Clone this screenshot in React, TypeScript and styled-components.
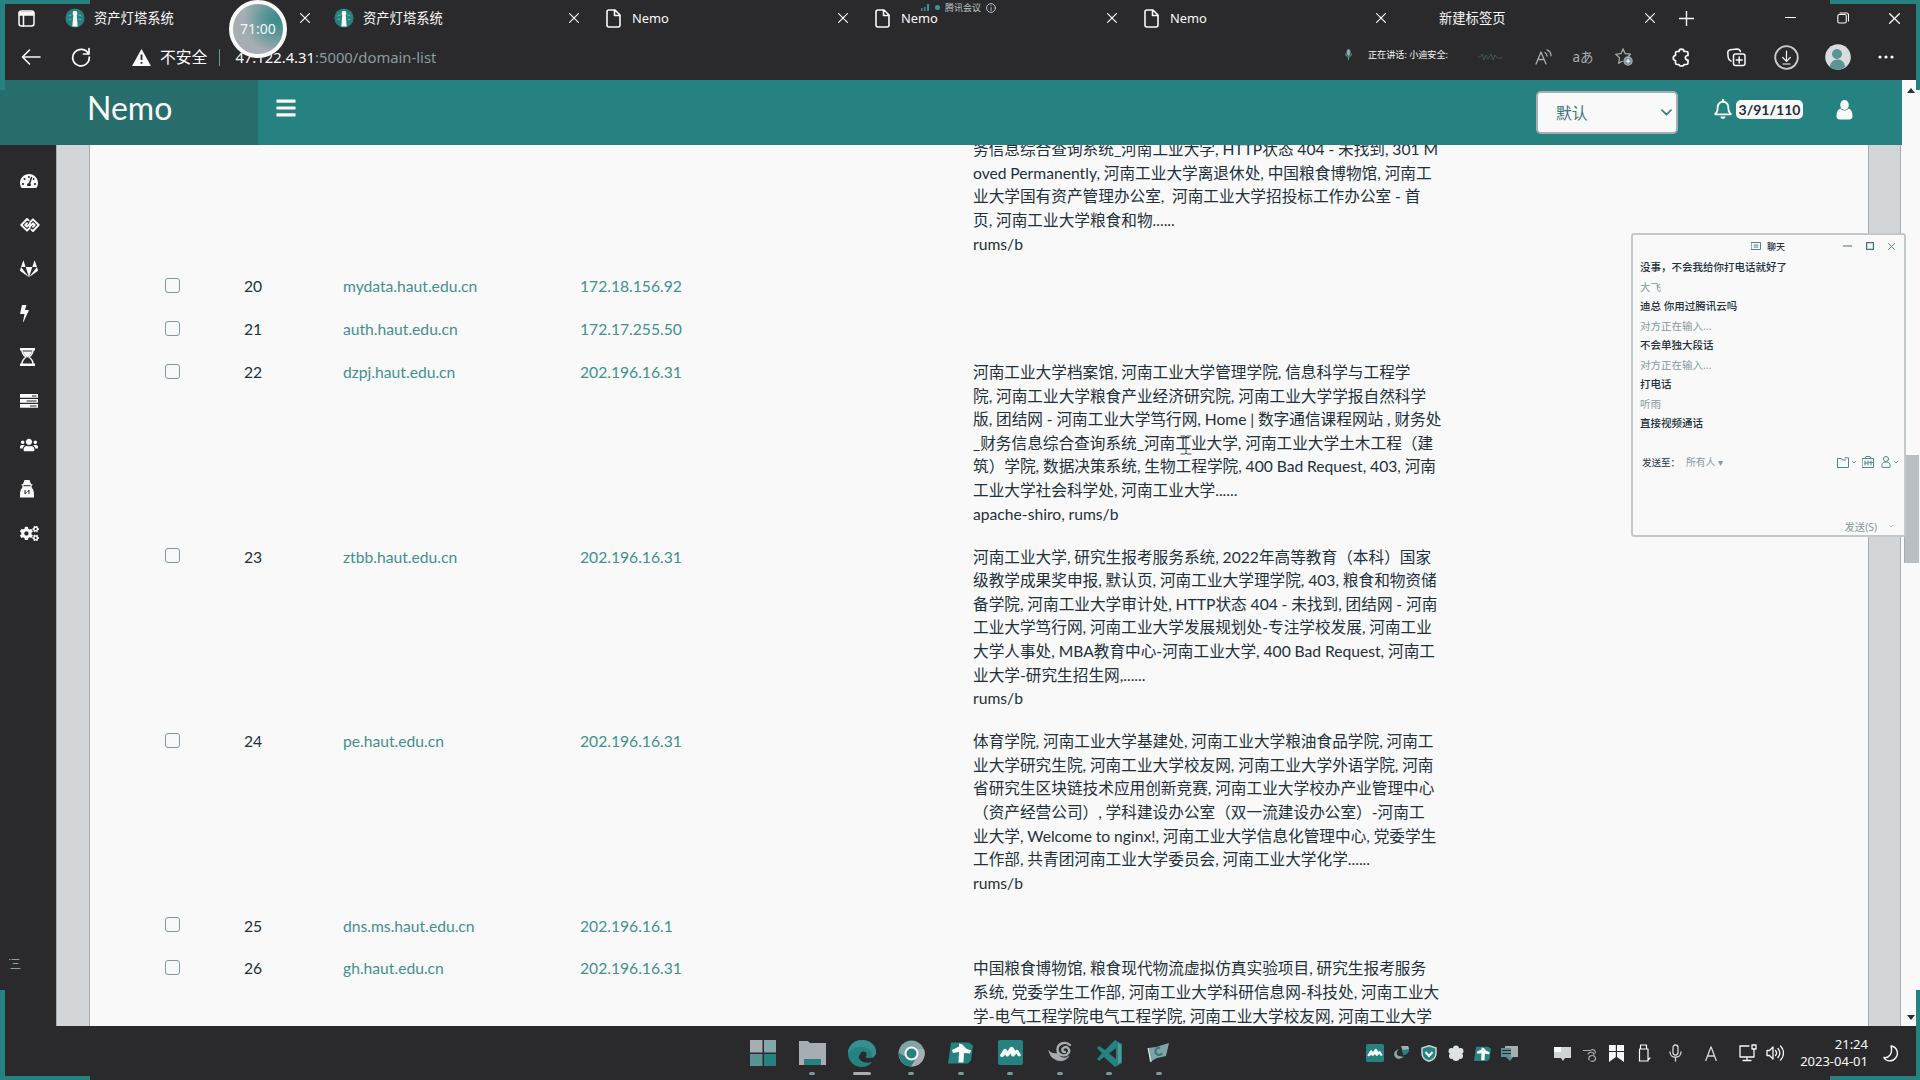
import React from "react";
import styled, { createGlobalStyle, css } from "styled-components";
import { FaGitlab, FaTachometerAlt, FaUsers, FaCogs, FaRegBell, FaBars } from "react-icons/fa";

const c = {
  dark: "#2a2a2c",
  teal: "#258280",
  brand: "#266d6c",
  white: "#f9f9f9",
  gray: "#a6adb3",
  ink: "#22303a",
  link: "#43908f",
  side: "#d3d6d9",
};

const ui = '"Noto Sans", "Noto Sans CJK SC", sans-serif';
const body = 'Lato, "Noto Sans CJK SC", sans-serif';

const Global = createGlobalStyle`
  *, *::before, *::after { box-sizing: border-box; }
  body { margin: 0; background: ${c.dark}; overflow: hidden; }
  svg { display: block; flex: none; }
`;

const Screen = styled.div`
  position: relative;
  width: 1920px;
  height: 1080px;
  display: flex;
  flex-direction: column;
  overflow: hidden;
  background: ${c.dark};
  color: ${c.white};
  font-family: ${ui};
`;

/* ---------- browser chrome ---------- */

const TabStrip = styled.div`
  height: 36px;
  flex: none;
  display: flex;
  align-items: center;
  padding-left: 18px;
`;

const Corner = styled.div`
  width: 47px;
`;

const Tab = styled.div`
  width: 269px;
  height: 36px;
  display: flex;
  align-items: center;
  font-size: 13.3px;
  line-height: 20px;
`;

const Favicon = styled.div`
  width: 20px;
  margin-right: 9px;
  display: flex;
  justify-content: center;
`;

const TabTitle = styled.span<{ $latin?: boolean }>`
  width: 206px;
  ${(p) => p.$latin && css`font-size: 12.9px;`}
`;

const WindowButtons = styled.div`
  display: flex;
  align-items: center;
  justify-content: space-between;
  width: 115px;
  margin-left: 91px;
`;

const AddressBar = styled.div`
  height: 44px;
  flex: none;
  display: flex;
  align-items: center;
  padding: 0 25px 2px 21px;
`;

const NavIcons = styled.div`
  display: flex;
  align-items: center;
  gap: 30px;
  width: 111px;
`;

const Insecure = styled.div`
  display: flex;
  align-items: center;
  gap: 9px;
  font-size: 15.8px;
  line-height: 22px;
`;

const Divider = styled.div`
  width: 1px;
  height: 17px;
  margin: 0 15px 0 12px;
  background: #5c9a9b;
`;

const Url = styled.div`
  font-size: 14.8px;
  line-height: 22px;
  color: #8d9a9e;
  span { color: ${c.white}; }
`;

const Speaking = styled.div`
  display: flex;
  align-items: center;
  gap: 16px;
  margin-left: auto;
  font-size: 9.1px;
  line-height: 14px;
  margin-top: -5px;
  white-space: pre;
`;

const BarIcons = styled.div`
  display: flex;
  align-items: center;
  margin-left: 27px;
`;

const Slot = styled.div<{ $w: number }>`
  width: ${(p) => p.$w}px;
  display: flex;
  align-items: center;
  justify-content: center;
`;

const Translate = styled.span`
  color: ${c.gray};
  font-size: 13.5px;
  line-height: 18px;
  white-space: nowrap;
`;

/* ---------- application ---------- */

const Page = styled.div`
  height: 946px;
  flex: none;
  display: flex;
  background: ${c.white};
`;

const Site = styled.div`
  width: 1902px;
  display: flex;
  flex-direction: column;
`;

const Header = styled.header`
  height: 65px;
  flex: none;
  position: relative;
  z-index: 1;
  display: flex;
  align-items: center;
  background: ${c.teal};
  padding-right: 49px;
`;

const Brand = styled.div`
  width: 258px;
  height: 65px;
  padding: 0 0 9px 87px;
  display: flex;
  align-items: center;
  background: ${c.brand};
  font-family: ${body};
  font-size: 32px;
  line-height: 40px;
`;

const MenuToggle = styled.div`
  margin: 0 auto 10px 17px;
  font-size: 22px;
`;

const Select = styled.div`
  width: 142px;
  height: 43px;
  border: 2px solid ${c.gray};
  border-radius: 5px;
  background: ${c.white};
  display: flex;
  align-items: center;
  justify-content: space-between;
  padding: 0 4px 0 18px;
  color: #3d7478;
  font: 15.8px/24px ${body};
`;

const Notice = styled.div`
  display: flex;
  align-items: center;
  gap: 3px;
  margin: 0 33px 7px 35px;
  font-size: 20px;
`;

const Badge = styled.span`
  width: 67px;
  height: 19px;
  border-radius: 5px;
  background: ${c.white};
  color: ${c.ink};
  text-align: center;
  font: 700 14px/19px ${body};
`;

const HeaderUser = styled.div`
  margin-bottom: 6px;
`;

const Main = styled.div`
  height: 881px;
  display: flex;
`;

const Sidebar = styled.nav`
  width: 56px;
  height: 881px;
  flex: none;
  background: ${c.dark};
  display: flex;
  flex-direction: column;
  padding: 14px 0 0 20px;
`;

const SideItem = styled.div`
  height: 44px;
  display: flex;
  align-items: center;
  font-size: 18px;
`;

const SideFoot = styled.div`
  margin: auto 0 56px -11px;
`;

const Gutter = styled.div<{ $w: number }>`
  width: ${(p) => p.$w}px;
  flex: none;
  background: ${c.side};
  border-left: 1px solid ${c.gray};
  border-right: 1px solid ${c.gray};
`;

const Table = styled.div`
  width: 1778px;
  height: 881px;
  overflow: hidden;
  padding-left: 75px;
  font: 15.67px/23.63px ${body};
  color: ${c.ink};
`;

const Row = styled.div<{ $first?: boolean }>`
  display: grid;
  grid-template-columns: 79px 99px 237px 393px 1fr;
  padding: 9.6px 0;
  ${(p) => p.$first && css`margin-top: -16.6px;`}
`;

const Check = styled.div`
  width: 15px;
  height: 15px;
  margin-top: 2.8px;
  border: 1px solid #7c9a9e;
  border-radius: 3px;
`;

const LinkText = styled.span`
  color: ${c.link};
`;

const Titles = styled.div`
  white-space: pre;
  word-spacing: -0.2px;
`;

const Scrollbar = styled.div`
  width: 18px;
  height: 946px;
  display: flex;
  flex-direction: column;
  align-items: center;
  padding: 8px 0 6px;
  background: ${c.white};
`;

const Thumb = styled.div`
  width: 15px;
  height: 108px;
  margin: 362px 0 auto;
  background: #b9bec3;
  border-left: 1px solid ${c.gray};
`;

/* ---------- chat window ---------- */

const Chat = styled.section`
  position: absolute;
  left: 1631px;
  top: 233px;
  width: 275px;
  height: 304px;
  z-index: 3;
  display: flex;
  flex-direction: column;
  background: ${c.white};
  border: 2px solid #c3c8cb;
  border-radius: 3px;
  color: ${c.ink};
  font-size: 10.5px;
`;

const ChatTitle = styled.div`
  height: 22px;
  display: flex;
  align-items: center;
  padding: 0 9px 0 118px;
  gap: 6px;
  font-size: 9px;
  font-weight: 500;
`;

const ChatButtons = styled.div`
  display: flex;
  align-items: center;
  gap: 14px;
  margin-left: auto;
  color: #3d7478;
`;

const Messages = styled.div`
  padding: 1px 7px 0;
  height: 185px;
  line-height: 19.5px;
`;

const Message = styled.div<{ $muted?: boolean }>`
  color: ${(p) => (p.$muted ? "#859a9f" : c.ink)};
  font-weight: ${(p) => (p.$muted ? 400 : 500)};
`;

const SendTo = styled.div`
  display: flex;
  align-items: center;
  height: 42px;
  padding: 0 6px 2px 9px;
  font-size: 9.5px;
`;

const Audience = styled.span`
  margin: 0 auto 0 6px;
  color: #859a9f;
  font-size: 9.8px;
`;

const ChatTools = styled.div`
  display: flex;
  align-items: center;
  gap: 3px;
  color: #4f8789;
`;

const Tool = styled.span<{ $after?: number }>`
  display: flex;
  align-items: center;
  gap: 3px;
  margin-right: ${(p) => p.$after ?? 0}px;
`;

const Send = styled.div`
  display: flex;
  align-items: center;
  justify-content: flex-end;
  gap: 12px;
  margin-top: auto;
  height: 18px;
  padding-right: 11px;
  color: #859a9f;
  font-size: 10.3px;
`;

/* ---------- taskbar ---------- */

const Taskbar = styled.footer`
  height: 54px;
  flex: none;
  display: flex;
  align-items: center;
  padding: 0 17px 0 738px;
`;

const TaskApp = styled.div`
  width: 49.5px;
  height: 54px;
  display: flex;
  flex-direction: column;
  align-items: center;
  justify-content: space-between;
  padding: 14px 0 5px;
`;

const Running = styled.div<{ $active?: boolean }>`
  width: ${(p) => (p.$active ? 18 : 6)}px;
  height: 3px;
  border-radius: 2px;
  background: ${(p) => (p.$active ? c.gray : "#6f9da0")};
`;

const Tray = styled.div`
  display: flex;
  align-items: center;
  margin-left: auto;
`;

const Clock = styled.div`
  width: 100px;
  text-align: right;
  font-size: 13px;
  line-height: 17.5px;
  padding-right: 9px;
`;

/* ---------- floating overlays ---------- */

const Bracket = styled.div<{ $v: "top" | "bottom"; $h: "left" | "right" }>`
  position: absolute;
  z-index: 5;
  width: 90px;
  height: 90px;
  ${(p) => p.$v}: 0;
  ${(p) => p.$h}: 0;
  border-${(p) => p.$v}: 4px solid ${c.teal};
  border-${(p) => p.$h}: ${(p) => (p.$h === "left" ? 5 : 4)}px solid ${c.teal};
  pointer-events: none;
`;

const Timer = styled.div`
  position: absolute;
  z-index: 6;
  left: 229px;
  top: 0;
  width: 58px;
  height: 58px;
  border: 4px solid ${c.white};
  border-radius: 50%;
  background: radial-gradient(circle at 88% 32%, #3a8a89 0, #5c9798 26%, ${c.gray} 60%);
  text-align: center;
  font-size: 14px;
  line-height: 49px;
  color: #f3f6f6;
`;

const Meeting = styled.div`
  position: absolute;
  z-index: 6;
  left: 921px;
  top: 0;
  height: 15px;
  display: flex;
  align-items: center;
  gap: 5px;
  color: #b7c4c6;
  font-size: 9px;
  line-height: 14px;
`;

const Dot = styled.i`
  width: 5px;
  height: 5px;
  border-radius: 50%;
  background: #2f9b99;
`;

const Caret = styled.div`
  position: absolute;
  z-index: 4;
  left: 1180px;
  top: 435px;
`;

type G = { size?: number; w?: number; h?: number; box?: string; sw?: number; color?: string; fill?: string; children: React.ReactNode };
const Glyph = ({ size = 16, w, h, box = "0 0 24 24", sw = 1.6, color = "currentColor", fill = "none", children }: G) => (
  <svg width={w ?? size} height={h ?? size} viewBox={box} fill={fill} stroke={color} strokeWidth={sw} strokeLinecap="round" strokeLinejoin="round">
    {children}
  </svg>
);

const Close = ({ size = 10 }) => (
  <Glyph size={size} box="0 0 10 10" sw={1.2}><path d="M.6.6l8.8 8.8M9.4.6L.6 9.4" /></Glyph>
);
const FileIcon = () => (
  <Glyph w={15} h={19} box="0 0 15 19" sw={1.6}><path d="M3 1h6l5 5v10a2 2 0 0 1-2 2H3a2 2 0 0 1-2-2V3a2 2 0 0 1 2-2zM8.5 1v5.5H14" /></Glyph>
);
const Lighthouse = () => (
  <svg width="20" height="20" viewBox="0 0 20 20">
    <circle cx="10" cy="10" r="9.6" fill={c.teal} />
    <path d="M8.4 3h3.2l1 3-.9 1 1 11.5H7.3l1-11.5-.9-1z" fill={c.white} />
    <path d="M3.5 8l3-1M3.5 11.5l3-.5M13.5 7l3 1M13.5 11l3 .7" stroke="#7bb0af" />
  </svg>
);
const Chevron = ({ w = 11, sw = 1.8 }) => (
  <Glyph w={w} h={w * 0.6} box="0 0 12 7" sw={sw}><path d="M1 1l5 5 5-5" /></Glyph>
);
const Tau = ({ size = 25 }) => (
  <svg width={size} height={size} viewBox="0 0 25 24">
    <path d="M3 2h18l4 3-2 15-3 3H0z" fill={c.teal} />
    <path d="M4 9.500l7-3.500V3l3.500 1L18 8l5 2-1 3-6-.5-.5 9.500h-5L11 11.500 5 12.500z" fill={c.white} />
  </svg>
);
const Peaks = ({ size = 25 }) => (
  <svg width={size} height={size} viewBox="0 0 24 24">
    <rect width="24" height="24" rx="2" fill={c.teal} />
    <path d="M2 14.500L5 9.500c1-1.500 2.500-1.500 3.500 0l.8 1.200 2-3.200c1-1.500 2.500-1.500 3.500 0l1.700 2.700c1-1.200 2.500-1 3.300.3l2 3.500c.5 1.500-1.500 2.500-2.800 1l-1.500-2-1.500 2c-1 1.200-2.200 1.200-3 0l-1.200-1.700-1.300 1.700c-1 1.200-2.200 1.200-3 0l-.7-1-.8 1c-1.500 2-4.500 1.500-4-.5z" fill={c.white} />
  </svg>
);
const Person = ({ w = 17, h = 20 }) => (
  <svg width={w} height={h} viewBox="0 0 17 20" fill={c.white}>
    <ellipse cx="8.500" cy="5" rx="4.300" ry="5" />
    <path d="M4.500 8.500C1.500 9.500.5 12 .5 16c0 2 1 3.500 3 3.500h10c2 0 3-1.500 3-3.500 0-4-1-6.500-4-7.500-2.500 2.700-5.500 2.700-8 0z" />
  </svg>
);
const Agent = () => (
  <svg width="14" height="18" viewBox="0 0 14 18">
    <path d="M4.500 0h5l1.500 4 2 .8-1.500 1 .3 2.200C13.500 9 14 12 14 15v2.500H0V15c0-3 .5-6 2.200-7l.3-2.200-1.500-1L3 4z" fill={c.white} />
    <path d="M3.500 5.700h7M5 10v4l1.500-2M9 14v-4l-1.500 2" stroke={c.dark} strokeWidth="1" fill="none" />
  </svg>
);
const Diamonds = () => (
  <Glyph w={20} h={14} box="0 0 20 14" sw={1.9}><path d="M8.500 2.200L7 1 1.300 7 7 12.700 9.800 9.800M7 5.200L5.300 7 7 8.700 10 5.700M10.200 4.200L13 1.300 18.700 7 13 13l-1.500-1.200M13 8.800L14.700 7 13 5.300 10 8.300" /></Glyph>
);
const Bolt = () => (
  <svg width="9" height="17" viewBox="0 0 9 17"><path d="M2 0h4.500L5 5h4L3.500 17l-.5-.3L4.500 9H0z" fill={c.white} /></svg>
);
const Hourglass = () => (
  <svg width="15" height="18" viewBox="0 0 15 18">
    <path d="M0 0h15v2.500H0zM0 15.500h15V18H0z" fill={c.white} />
    <path d="M2 2c0 3.500 2 5.500 4 7-2 1.500-4 3.500-4 7M13 2c0 3.500-2 5.500-4 7 2 1.500 4 3.500 4 7" stroke={c.white} strokeWidth="1.500" fill="none" />
    <path d="M3 3.500h9C11.500 6.500 9 8 7.500 9.500 6 8 3.500 6.500 3 3.500z" fill={c.white} />
  </svg>
);
const Tasks = () => (
  <svg width="18" height="14" viewBox="0 0 18 14">
    <path d="M0 0h18v3.800H0zM0 5h18v3.800H0zM0 10h18v3.800H0z" fill={c.white} />
    <path d="M12 1.400h4.500v1H12zM6.500 6.400h10v1h-10zM10 11.400h6.500v1H10z" fill={c.dark} />
  </svg>
);

const tabs = [
  { title: "资产灯塔系统", icon: <Lighthouse /> },
  { title: "资产灯塔系统", icon: <Lighthouse /> },
  { title: "Nemo", icon: <FileIcon /> },
  { title: "Nemo", icon: <FileIcon /> },
  { title: "Nemo", icon: <FileIcon /> },
  { title: "新建标签页", icon: null },
];

const rows = [
  { no: "", host: "", ip: "", text: "务信息综合查询系统_河南工业大学, HTTP状态 404 - 未找到, 301 M\noved Permanently, 河南工业大学离退休处, 中国粮食博物馆, 河南工\n业大学国有资产管理办公室,  河南工业大学招投标工作办公室 - 首\n页, 河南工业大学粮食和物......\nrums/b" },
  { no: "20", host: "mydata.haut.edu.cn", ip: "172.18.156.92", text: "" },
  { no: "21", host: "auth.haut.edu.cn", ip: "172.17.255.50", text: "" },
  { no: "22", host: "dzpj.haut.edu.cn", ip: "202.196.16.31", text: "河南工业大学档案馆, 河南工业大学管理学院, 信息科学与工程学\n院, 河南工业大学粮食产业经济研究院, 河南工业大学学报自然科学\n版, 团结网 - 河南工业大学笃行网, Home | 数字通信课程网站 , 财务处\n_财务信息综合查询系统_河南工业大学, 河南工业大学土木工程（建\n筑）学院, 数据决策系统, 生物工程学院, 400 Bad Request, 403, 河南\n工业大学社会科学处, 河南工业大学......\napache-shiro, rums/b" },
  { no: "23", host: "ztbb.haut.edu.cn", ip: "202.196.16.31", text: "河南工业大学, 研究生报考服务系统, 2022年高等教育（本科）国家\n级教学成果奖申报, 默认页, 河南工业大学理学院, 403, 粮食和物资储\n备学院, 河南工业大学审计处, HTTP状态 404 - 未找到, 团结网 - 河南\n工业大学笃行网, 河南工业大学发展规划处-专注学校发展, 河南工业\n大学人事处, MBA教育中心-河南工业大学, 400 Bad Request, 河南工\n业大学-研究生招生网,......\nrums/b" },
  { no: "24", host: "pe.haut.edu.cn", ip: "202.196.16.31", text: "体育学院, 河南工业大学基建处, 河南工业大学粮油食品学院, 河南工\n业大学研究生院, 河南工业大学校友网, 河南工业大学外语学院, 河南\n省研究生区块链技术应用创新竞赛, 河南工业大学校办产业管理中心\n（资产经营公司）, 学科建设办公室（双一流建设办公室）-河南工\n业大学, Welcome to nginx!, 河南工业大学信息化管理中心, 党委学生\n工作部, 共青团河南工业大学委员会, 河南工业大学化学......\nrums/b" },
  { no: "25", host: "dns.ms.haut.edu.cn", ip: "202.196.16.1", text: "" },
  { no: "26", host: "gh.haut.edu.cn", ip: "202.196.16.31", text: "中国粮食博物馆, 粮食现代物流虚拟仿真实验项目, 研究生报考服务\n系统, 党委学生工作部, 河南工业大学科研信息网-科技处, 河南工业大\n学-电气工程学院电气工程学院, 河南工业大学校友网, 河南工业大学" },
];

const messages: [string, boolean][] = [
  ["没事，不会我给你打电话就好了", false],
  ["大飞", true],
  ["迪总 你用过腾讯云吗", false],
  ["对方正在输入...", true],
  ["不会单独大段话", false],
  ["对方正在输入...", true],
  ["打电话", false],
  ["听雨", true],
  ["直接视频通话", false],
];

const apps = [
  <svg width="26" height="26" viewBox="0 0 26 26"><path d="M0 0h12.500v12.500H0z" fill={c.gray} /><path d="M14 0h12v12.500H14z" fill="#86a7aa" /><path d="M0 14h12.500v12H0z" fill="#589496" /><path d="M14 14h12v12H14z" fill={c.teal} /></svg>,
  <svg width="27" height="26" viewBox="0 0 27 26"><path d="M0 1h9l2 2h16v22H0z" fill={c.gray} /><path d="M5 19h17v6H5z" fill={c.teal} /></svg>,
  <svg width="28" height="27" viewBox="0 0 28 27"><path d="M14 0c8 0 14 5 14 12 0 4-3 6-7 6-4 0-5-2-4-4-2-2-5-1-6 2-1 5 6 8 13 6-3 4-7 5-10 5C6 27 0 21 0 13.500S6 0 14 0z" fill={c.teal} /><path d="M14 0c8 0 14 5 14 12 0 3-2 5-4 6 1-8-5-12-13-11C7 7 3 9 0 13 0 6 6 0 14 0z" fill="#378f8d" /><circle cx="15.500" cy="14.500" r="3" fill={c.dark} /></svg>,
  <svg width="27" height="27" viewBox="0 0 27 27"><circle cx="13.500" cy="13.500" r="13" fill="#7fa4a7" /><path d="M1 13a13 13 0 0 0 12 13.500l5-8-9-1z" fill={c.teal} /><path d="M26 9a13 13 0 0 1-13 17.500l6-9V9z" fill={c.gray} /><circle cx="13.500" cy="13.500" r="6" fill={c.teal} stroke={c.white} strokeWidth="2" /></svg>,
  <Tau />,
  <Peaks />,
  <Glyph w={24} h={24} box="0 0 24 24" sw={2.4} color={c.gray}><path d="M22 5C18 1 10 3 9.500 9c-.5 7 9 8.500 11.500 3 1-3-2-6-5-4.500-3 2-1.500 5 1 4.500" /><path d="M1 11c4 4 7 2 9 3 3 5 8 5 11 2-3 5-10 6-14 3-3-1-5-4-6-8z" fill={c.gray} strokeWidth=".8" /></Glyph>,
  <svg width="27" height="27" viewBox="0 0 27 27"><path d="M19 0l7 4v19l-7 4L8 17l-5 4-2-2 5-6-5-5 2-2 6 4zM20 8l-7 5.500 7 5.500z" fill={c.teal} fillRule="evenodd" /><path d="M22 3l3 2v17l-3 2z" fill="#529998" /></svg>,
  <svg width="23" height="24" viewBox="0 0 23 24"><path d="M1 8l8-1 13-4-3 13-9 2-7 4z" fill="#7fa4a7" /><path d="M13 8a3.500 3.500 0 1 0 2 5" stroke="#3b7779" strokeWidth="2" fill="none" /><path d="M1 8l3 14" stroke={c.white} /></svg>,
];

const sideIcons = [
  <FaTachometerAlt />, <Diamonds />, <FaGitlab />, <Bolt />, <Hourglass />, <Tasks />, <FaUsers />, <Agent />, <FaCogs size={19} />,
];

export default function App() {
  return (
    <>
      <Global />
      <Screen>
        <TabStrip>
          <Corner>
            <Glyph size={17} box="0 0 17 17" sw={1.5}><rect x="1" y="1" width="15" height="15" rx="2.500" /><path d="M1.500 2.500h14v2.500h-14z" fill="currentColor" /><path d="M5.500 5v11" /></Glyph>
          </Corner>
          {tabs.map((t, i) => (
            <Tab key={i}>
              <Favicon>{t.icon}</Favicon>
              <TabTitle $latin={t.title === "Nemo"}>{t.title}</TabTitle>
              <Close />
            </Tab>
          ))}
          <Glyph size={15} box="0 0 15 15" sw={1.4}><path d="M7.500 0v15M0 7.500h15" /></Glyph>
          <WindowButtons>
            <Glyph w={11} h={10} box="0 0 11 10" sw={1}><path d="M0 4.500h11" /></Glyph>
            <Glyph size={12} box="0 0 12 12" sw={1.1}><rect x=".8" y="2.500" width="8.500" height="8.500" rx="1.500" /><path d="M3 1h6.500a2 2 0 0 1 2 2v6" /></Glyph>
            <Close size={11} />
          </WindowButtons>
        </TabStrip>

        <AddressBar>
          <NavIcons>
            <Glyph w={20} h={16} box="0 0 20 16" sw={1.6}><path d="M19 8H1.500M8.500 1l-7 7 7 7" /></Glyph>
            <Glyph size={20} box="0 0 20 20" sw={1.7}><path d="M17.500 7A8.300 8.300 0 1 0 18.300 10M18 1.500V7h-5.500" /></Glyph>
          </NavIcons>
          <Insecure>
            <svg width="19" height="17" viewBox="0 0 19 17"><path d="M9.500 0L19 17H0z" fill={c.white} /><path d="M9.500 5.500v5.500M9.500 13v1.800" stroke={c.dark} strokeWidth="1.800" /></svg>
            不安全
          </Insecure>
          <Divider />
          <Url><span>47.122.4.31</span>:5000/domain-list</Url>
          <Speaking>
            <Glyph w={7} h={11} box="0 0 7 11" sw={1} color="#5c9b9c"><rect x="2" y=".5" width="3" height="6" rx="1.500" fill={c.gray} /><path d="M.6 5c0 4 5.800 4 5.800 0M3.500 8v2.500" /></Glyph>
            正在讲话: 小迪安全:
          </Speaking>
          <BarIcons>
            <Slot $w={30}><Glyph w={27} h={10} box="0 0 27 10" sw={1} color="#39595b"><path d="M1 5h2l2-3 2 6 2-5 2 4 3-5 2 6 2-5 2 3h5" /></Glyph></Slot>
            <Slot $w={76}><Glyph w={17} h={16} box="0 0 17 16" sw={1.300} color={c.gray}><path d="M1 15L6 3l5 12M3 10.500h6M10 3.500c1.500.8 2 2 2 3.500M12 .8c2.500 1 4 3.500 4 6" /></Glyph></Slot>
            <Slot $w={4}><Translate>aあ</Translate></Slot>
            <Slot $w={78}><Glyph size={18} box="0 0 20 20" sw={1.400} color={c.gray}><path d="M9 1l2.400 5.300 5.800.6-2.500 2.600M9 1L6.600 6.300.8 7l4.300 4L4 17l4-2.200" /><circle cx="14.500" cy="14.500" r="4.500" fill="#6f9094" /><path d="M14.500 12.500v4M12.500 14.500h4" stroke={c.white} /></Glyph></Slot>
            <Slot $w={36}><Glyph size={19} box="0 0 19 19" sw={1.700}><path d="M5 3.500h2c0-3.300 5-3.300 5 0h2.500a1.500 1.500 0 0 1 1.500 1.500v2.500c-3.500 0-3.500 4.500 0 4.500v3a1.500 1.500 0 0 1-1.500 1.500H12c0 2-5 2-5 0H5A1.500 1.500 0 0 1 3.500 15v-2.500c-3-.3-3-4.700 0-5V5A1.500 1.500 0 0 1 5 3.500z" /></Glyph></Slot>
            <Slot $w={74}><Glyph size={19} box="0 0 19 19" sw={1.500}><rect x="6.500" y="6" width="11.500" height="11.500" rx="2" /><path d="M12.200 9v6M9.200 12h6M4 13C2.500 12.500 1.500 11 1.200 9.500L.8 5C.7 3.200 2 2 3.500 1.800L10 1c2 0 3 1 3.500 2.500" /></Glyph></Slot>
            <Slot $w={26}><Glyph size={25} box="0 0 25 25" sw={1.800} color="#c5cbce"><circle cx="12.500" cy="12.500" r="11.300" /><path d="M12.500 6v10M8.700 12.500l3.800 3.800 3.800-3.800M9 19h7" stroke={c.white} strokeWidth="1.200" /></Glyph></Slot>
            <Slot $w={78}><svg width="26" height="26" viewBox="0 0 26 26"><circle cx="13" cy="13" r="12.800" fill="#d9dcde" /><circle cx="12" cy="10" r="5" fill="#5a9495" /><path d="M5 23c0-10 15-10 15 0-4 3.500-11 3.500-15 0z" fill="#5a9495" /></svg></Slot>
            <Slot $w={18}><svg width="16" height="4" viewBox="0 0 16 4" fill={c.white}><circle cx="2" cy="2" r="1.600" /><circle cx="8" cy="2" r="1.600" /><circle cx="14" cy="2" r="1.600" /></svg></Slot>
          </BarIcons>
        </AddressBar>

        <Page>
          <Site>
            <Header>
              <Brand>Nemo</Brand>
              <MenuToggle><FaBars /></MenuToggle>
              <Select>默认<Chevron /></Select>
              <Notice><FaRegBell /><Badge>3/91/110</Badge></Notice>
              <HeaderUser><Person /></HeaderUser>
            </Header>
            <Main>
              <Sidebar>
                {sideIcons.map((icon, i) => <SideItem key={i}>{icon}</SideItem>)}
                <SideFoot><Glyph size={12} box="0 0 12 12" sw={1} color="#8aa3a6"><path d="M0 1.500h1M3 1.500h7M4 5.500h5M2 10.500h9" /></Glyph></SideFoot>
              </Sidebar>
              <Gutter $w={34} />
              <Table>
                {rows.map((r, i) => (
                  <Row key={i} $first={i === 0}>
                    {r.no ? <Check /> : <span />}
                    <span>{r.no}</span>
                    <LinkText>{r.host}</LinkText>
                    <LinkText>{r.ip}</LinkText>
                    <Titles>{r.text}</Titles>
                  </Row>
                ))}
              </Table>
              <Gutter $w={33} />
            </Main>
          </Site>
          <Scrollbar>
            <svg width="8" height="5" viewBox="0 0 8 5"><path d="M4 0l4 5H0z" fill={c.ink} /></svg>
            <Thumb />
            <svg width="8" height="5" viewBox="0 0 8 5"><path d="M4 5l4-5H0z" fill={c.ink} /></svg>
          </Scrollbar>
        </Page>

        <Taskbar>
          {apps.map((a, i) => (
            <TaskApp key={i}>{a}{i > 0 && <Running $active={i === 2} />}</TaskApp>
          ))}
          <Tray>
            <Slot $w={27}><Peaks size={18} /></Slot>
            <Slot $w={27}><svg width="17" height="16" viewBox="0 0 17 16"><path d="M8 1h7c3 4 0 9-5 9z" fill={c.teal} /><path d="M8 1h7l1 3-6 1z" fill={c.gray} /><path d="M6 4c-7 2-6 9 0 10l5-2-5-1c-3-1-3-4 0-7z" fill="#8ba6a9" /></svg></Slot>
            <Slot $w={27}><svg width="16" height="17" viewBox="0 0 16 17"><path d="M8 .8l7 2.200v5c0 4-3 7-7 8.300C4 15 1 12 1 8V3z" fill={c.teal} stroke="#c9d4d5" strokeWidth="1.500" /><path d="M4.500 7l3.500 4 3.500-4" stroke={c.white} strokeWidth="2" fill="none" /></svg></Slot>
            <Slot $w={27}><svg width="16" height="16" viewBox="0 0 16 16" fill="#dfe2e3"><circle cx="8" cy="3.500" r="3" /><circle cx="3.500" cy="6" r="3" /><circle cx="12.500" cy="6" r="3" /><circle cx="4" cy="11" r="3" /><circle cx="12" cy="11" r="3" /><circle cx="8" cy="12.500" r="3.500" /><circle cx="8" cy="8.500" r="4" /></svg></Slot>
            <Slot $w={27}><Tau size={17} /></Slot>
            <Slot $w={27}><svg width="17" height="15" viewBox="0 0 17 15"><path d="M4 0h13v11H4z" fill={c.gray} /><path d="M0 2h10v9H0z" fill="#5e8f92" /><path d="M1 4.500h9M1 7.500h9" stroke={c.dark} /><path d="M5 11h7l-3 4z" fill="#5e8f92" /></svg></Slot>
            <Slot $w={18} />
            <Slot $w={42}><svg width="17" height="15" viewBox="0 0 17 15"><path d="M0 1h17v11h-6l-2 3-2-3H0z" fill="#d0d4d6" /><path d="M0 1h7v5H0z" fill={c.white} /></svg></Slot>
            <Slot $w={14}><Glyph w={15} h={17} box="0 0 15 17" sw={1.200} color={c.gray}><path d="M0 5.500h7M8 5c3-1 5 1 4 3M5 9c2-3 6-2 6 1M6 15c-1-4 3-6 6-3 2 3-2 5-4 4" /></Glyph></Slot>
            <Slot $w={39}><svg width="15" height="17" viewBox="0 0 15 17" fill={c.white}><path d="M0 0h6.800v6H0zM8 0h7v6H8zM0 7h6.800v5L0 17zM8 7h7v10l-7-5z" /></svg></Slot>
            <Slot $w={16}><Glyph w={14} h={18} box="0 0 14 18" sw={1.200}><path d="M3.500 5V1h6v4M2.500 5h8.500v12H2.500zM11 16l2-2" /></Glyph></Slot>
            <Slot $w={46}><Glyph w={13} h={18} box="0 0 13 18" sw={1.300} color="#d3d8da"><rect x="4" y="1" width="5" height="10" rx="2.500" /><path d="M1 8c0 7 11 7 11 0M6.500 13.500V17" /></Glyph></Slot>
            <Slot $w={26}><Glyph w={12} h={15} box="0 0 12 15" sw={1.300} color="#d3d8da"><path d="M.8 14.500L6 .8l5.200 13.700M2.500 10h7" /></Glyph></Slot>
            <Slot $w={48}><Glyph w={18} h={18} box="0 0 18 18" sw={1.300}><path d="M10 2H1v11h14V9M4 16.500h8M8 13v3M13 1h4v4h-4zM15 5v4" /></Glyph></Slot>
            <Slot $w={5}><Glyph w={18} h={16} box="0 0 18 16" sw={1.300}><path d="M1 5.500h2.500L7 2v12l-3.500-3.500H1zM9.500 5.500c1.300 1.500 1.300 3.500 0 5M12 3.500c2.500 3 2.500 6 0 9M14.500 1c4 4 4 10 0 14" /></Glyph></Slot>
            <Clock>21:24<br />2023-04-01</Clock>
            <Slot $w={26}><Glyph w={15} h={17} box="0 0 15 17" sw={1.400}><path d="M8 1c6 1 8 7 5 11.500C10 17 3 17 1 12.500c5 1 9-4 7-11.500z" /></Glyph></Slot>
          </Tray>
        </Taskbar>

        <Chat>
          <ChatTitle>
            <Glyph w={10} h={8} box="0 0 10 8" sw={1} color="#4f8789"><path d="M.5.500h9v7h-9zM3 3h4M3 5h4" /></Glyph>
            聊天
            <ChatButtons>
              <Glyph w={9} h={8} box="0 0 9 8" sw={1}><path d="M0 4h9" /></Glyph>
              <Glyph size={8} box="0 0 8 8" sw={1.200}><path d="M.600.600h6.800v6.800H.6z" /></Glyph>
              <Close size={7} />
            </ChatButtons>
          </ChatTitle>
          <Messages>
            {messages.map(([text, muted], i) => <Message key={i} $muted={muted}>{text}</Message>)}
          </Messages>
          <SendTo>
            发送至：
            <Audience>所有人 ▾</Audience>
            <ChatTools>
              <Tool $after={3}>
                <Glyph w={12} h={11} box="0 0 12 11" sw={1}><path d="M.500 10.500v-9h4l1 1.500h3M.500 10.500h11V4M8 .8h3.500V4" /></Glyph>
                <Chevron w={4} sw={2.5} />
              </Tool>
              <Tool $after={4}>
                <Glyph size={12} box="0 0 12 12" sw={1}><path d="M.500 2.500h11v9H.500zM3 2.500l1-2h4l1 2M3 5v4M3 7h3M6 5v4M9 5v4M7.500 6.500h3" /></Glyph>
              </Tool>
              <Tool>
                <Glyph w={10} h={12} box="0 0 10 12" sw={1}><circle cx="5" cy="3" r="2.500" /><path d="M1 11c-1-3 1-5 4-5s5 2 4 5z" /></Glyph>
                <Chevron w={4} sw={2.5} />
              </Tool>
            </ChatTools>
          </SendTo>
          <Send>发送(S)<Chevron w={4} /></Send>
        </Chat>

        <Caret><Glyph w={12} h={20} box="0 0 12 20" sw={1} color="#3b4a50"><path d="M1 1h4l1 1 1-1h4M6 2v16M1 19h4l1-1 1 1h4" /></Glyph></Caret>
        <Meeting>
          <svg width="9" height="7" viewBox="0 0 9 7" fill="#3f8f8e"><path d="M0 4h1.500v3H0zM3 3h1.500v4H3zM6 0h2v7H6z" /></svg>
          <Dot />
          腾讯会议
          <Glyph size={10} box="0 0 10 10" sw={1}><circle cx="5" cy="5" r="4.400" /><path d="M5 4.500v3M5 2.500v.2" /></Glyph>
        </Meeting>
        <Timer>71:00</Timer>
        <Bracket $v="top" $h="left" />
        <Bracket $v="top" $h="right" />
        <Bracket $v="bottom" $h="left" />
        <Bracket $v="bottom" $h="right" />
      </Screen>
    </>
  );
}
